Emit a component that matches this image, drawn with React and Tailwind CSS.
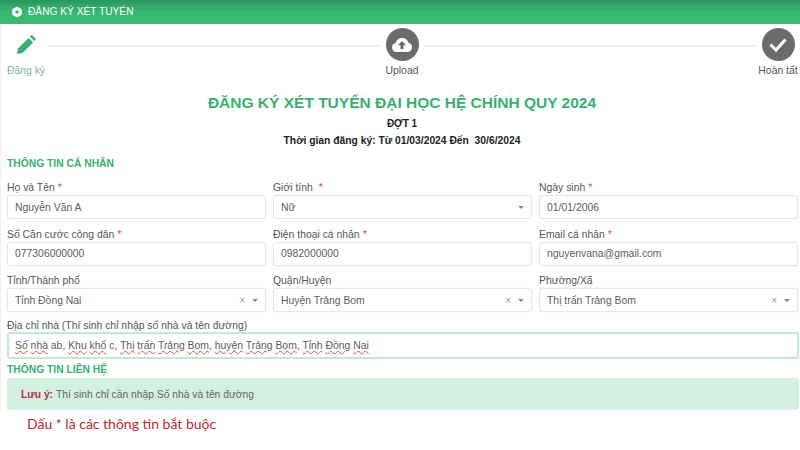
import React from "react";

function Label({ text, gap }) {
  return (
    <div className="h-[16px] pt-[1px] text-[10.4px] leading-[16px] text-[#555]">
      {text}
      <span className={`text-[#d0455a] ${gap ? "ml-[6px]" : "ml-[3px]"}`}>*</span>
    </div>
  );
}

function PlainLabel({ text }) {
  return <div className="h-[16px] pt-[1px] text-[10.4px] leading-[16px] text-[#555]">{text}</div>;
}

function Box({ children }) {
  return (
    <div className="flex h-[24px] items-center rounded-[3px] border border-[#e6e6e6] bg-white pl-[7px] pr-[7px] pt-[1px] text-[10.4px] text-[#5c5c5c] shadow-[0_0_2px_rgba(0,0,0,0.06)]">
      {children}
    </div>
  );
}

function Select({ value, clear }) {
  return (
    <Box>
      <span className="flex-1 truncate">{value}</span>
      {clear && <span className="mr-[7px] text-[10px] leading-none text-[#999]">×</span>}
      <span className="h-0 w-0 border-x-[3px] border-t-[3px] border-x-transparent border-t-[#888]" />
    </Box>
  );
}

function Field({ label, gap, plain, children }) {
  return (
    <div className="min-w-0">
      {plain ? <PlainLabel text={label} /> : <Label text={label} gap={gap} />}
      {children}
    </div>
  );
}

function Wavy({ children }) {
  const words = children.split(" ");
  return (
    <>
      {words.map((w, i) => (
        <React.Fragment key={i}>
          {i > 0 && " "}
          <span className="underline decoration-wavy decoration-[#d9534f] decoration-[1px] underline-offset-1">{w}</span>
        </React.Fragment>
      ))}
    </>
  );
}

function Line() {
  return <div className="mt-[17px] h-[2px] flex-1 bg-[#efefef]" />;
}

function StepCircle({ children, label }) {
  return (
    <div className="flex w-[44px] flex-col items-center">
      <div className="flex h-[33px] w-[33px] items-center justify-center rounded-full bg-[#6b6b6b]">{children}</div>
      <div className="mt-[2px] whitespace-nowrap text-[10.4px] leading-[16px] text-[#555]">{label}</div>
    </div>
  );
}

export default function App() {
  return (
    <div className="h-[450px] w-[800px] overflow-hidden bg-white font-['Liberation_Sans',Arial,sans-serif]">
      <div className="flex h-[24px] items-center gap-[5px] bg-gradient-to-b from-[#2a9560] via-[#38b872] to-[#39bb74] pl-[11px] text-[10.2px] text-white">
        <svg width="12" height="12" viewBox="0 0 24 24" fill="white">
          <path fillRule="evenodd" d="M12 1l9.5 5.5v11L12 23l-9.5-5.5v-11zM12 8.5a3.5 3.5 0 100 7 3.5 3.5 0 000-7z" />
        </svg>
        <span>ĐĂNG KÝ XÉT TUYỂN</span>
      </div>

      <div className="shadow-[inset_1px_0_0_#f0f0f0]">
        <div className="flex pl-[4px] pt-[4px] pr-0">
          <div className="flex w-[44px] flex-col items-center">
            <div className="flex h-[33px] w-[33px] items-center justify-center">
              <svg width="20" height="20" viewBox="0 0 20 20" fill="#38b06f">
                <path d="M1 19l1-5.5L12.6 2.9l4.5 4.5L6.5 18zM13.9 1.6l1-1a1.2 1.2 0 011.7 0l2.8 2.8a1.2 1.2 0 010 1.7l-1 1z" />
              </svg>
            </div>
            <div className="mt-[2px] whitespace-nowrap text-[10.4px] leading-[16px] text-[#7fb79b]">Đăng ký</div>
          </div>
          <Line />
          <StepCircle label="Upload">
            <svg width="24" height="24" viewBox="0 0 24 24">
              <path fill="white" d="M6.5 19a4.6 4.6 0 01-.8-9.1A6.6 6.6 0 0118.3 9.6 4.8 4.8 0 0118 19z" />
              <path fill="#6b6b6b" d="M12 8l4 4.2h-2.5V16h-3v-3.8H8z" />
            </svg>
          </StepCircle>
          <Line />
          <StepCircle label="Hoàn tất">
            <svg width="22" height="22" viewBox="0 0 22 22" fill="none" stroke="white" strokeWidth="3" strokeLinecap="square">
              <path d="M4.5 11.5l4.5 4.5 8.5-9.5" />
            </svg>
          </StepCircle>
        </div>

        <div className="pl-[4px]">
          <div className="mt-[14px] text-center text-[15.5px] font-bold leading-[20px] text-[#38b06f]">
            ĐĂNG KÝ XÉT TUYỂN ĐẠI HỌC HỆ CHÍNH QUY 2024
          </div>
          <div className="mt-[4px] text-center text-[10px] font-bold leading-[14px] text-[#222]">ĐỢT 1</div>
          <div className="mt-[3px] text-center text-[10.3px] font-bold leading-[14px] text-[#222]">
            Thời gian đăng ký: Từ 01/03/2024 Đến&nbsp; 30/6/2024
          </div>
        </div>

        <div className="pl-[7px] pr-[1px] pb-[1px]">
          <div className="mt-[9px] text-[10.3px] font-bold leading-[14px] text-[#38b06f]">THÔNG TIN CÁ NHÂN</div>

          <div className="mr-[1px] mt-[8px] grid grid-cols-3 gap-x-[7px] gap-y-[6.5px]">
            <Field label="Họ và Tên"><Box>Nguyễn Văn A</Box></Field>
            <Field label="Giới tính" gap><Select value="Nữ" /></Field>
            <Field label="Ngày sinh"><Box>01/01/2006</Box></Field>
            <Field label="Số Căn cước công dân"><Box>077306000000</Box></Field>
            <Field label="Điện thoại cá nhân"><Box>0982000000</Box></Field>
            <Field label="Email cá nhân"><Box>nguyenvana@gmail.com</Box></Field>
            <Field label="Tỉnh/Thành phố" plain><Select value="Tỉnh Đồng Nai" clear /></Field>
            <Field label="Quận/Huyện" plain><Select value="Huyện Trảng Bom" clear /></Field>
            <Field label="Phường/Xã" plain><Select value="Thị trấn Trảng Bom" clear /></Field>
          </div>

          <div className="mt-[7px] h-[13px] text-[10.4px] leading-[14px] text-[#555]">Địa chỉ nhà (Thí sinh chỉ nhập số nhà và tên đường)</div>
          <div className="flex h-[27px] items-center rounded-[3px] border-2 border-[#c5e8d3] bg-white pl-[6px] pt-[1px] text-[10.4px] text-[#5c5c5c]">
            <span>
              <Wavy>Số nhà</Wavy> ab, <Wavy>Khu khổ</Wavy> c, <Wavy>Thị trấn Trảng Bom</Wavy>, <Wavy>huyện Trảng Bom</Wavy>, <Wavy>Tỉnh Đồng Nai</Wavy>
            </span>
          </div>

          <div className="mt-[3px] h-[14px] pt-[1px] text-[10.3px] font-bold leading-[14px] text-[#38b06f]">THÔNG TIN LIÊN HỆ</div>

          <div className="mt-[2px] flex h-[32px] items-center rounded-[3px] bg-[#d4f0e0] pl-[14px] pt-[1px] text-[10.3px] text-[#5a6b62]">
            <span className="mr-[3px] font-bold text-[#b5304a]">Lưu ý:</span>
            Thí sinh chỉ cần nhập Số nhà và tên đường
          </div>
        </div>
      </div>

      <div className="mt-[4px] pl-[27px] font-['Lato',sans-serif] text-[14px] leading-[18px] text-[#c0272d]">
        Dấu * là các thông tin bắt buộc
      </div>
    </div>
  );
}
